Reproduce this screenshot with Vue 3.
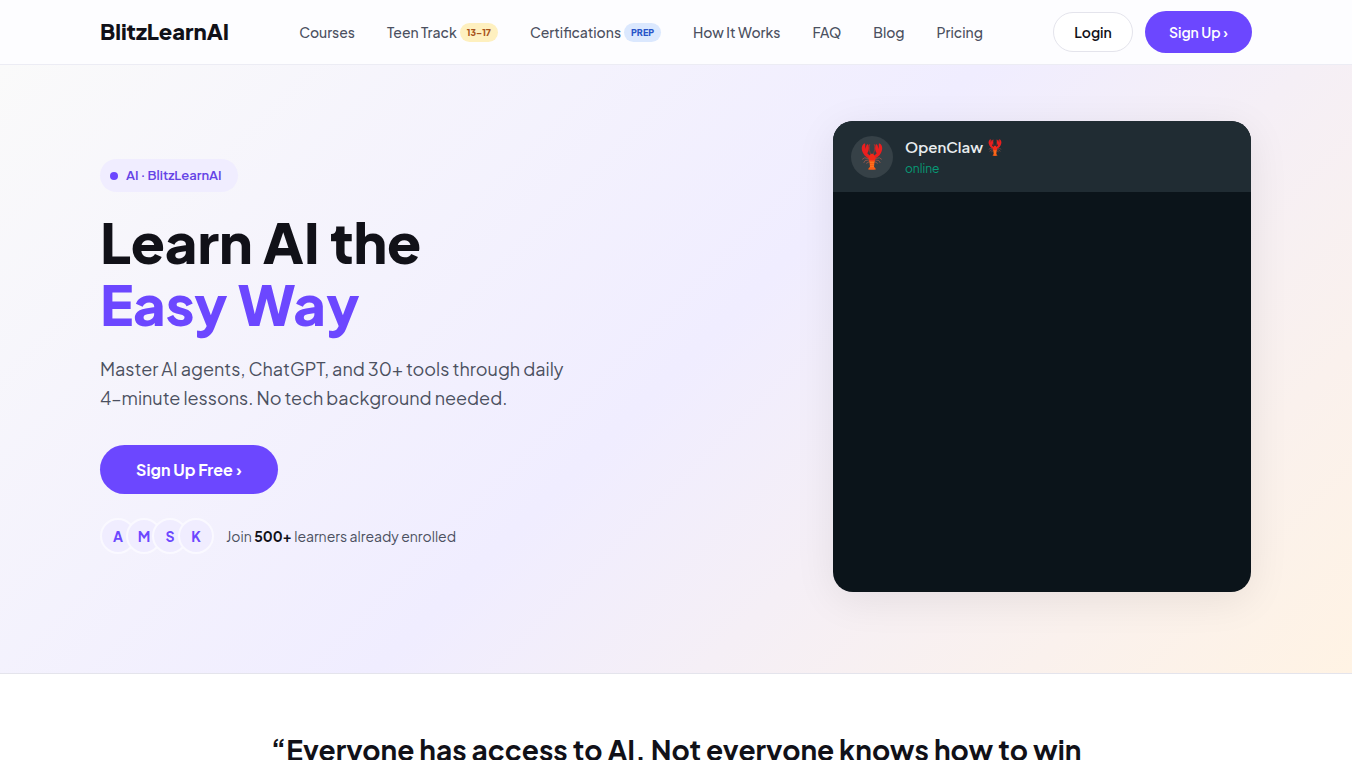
<script setup>
const links = [
  { label: 'Courses' },
  { label: 'Teen Track', tag: '13–17', tone: 'amber' },
  { label: 'Certifications', tag: 'PREP', tone: 'blue' },
  { label: 'How It Works' },
  { label: 'FAQ' },
  { label: 'Blog' },
  { label: 'Pricing' },
]
const learners = ['A', 'M', 'S', 'K']
</script>

<template>
  <div class="page">
    <svg class="defs" width="0" height="0" aria-hidden="true">
      <symbol id="lobster" viewBox="0 0 32 40">
        <g fill="none" stroke-linecap="round">
          <path d="M15 18C12 13 11 7 12.500 2M17 18c3-5 4-11 2.500-16" stroke="#a8362c" stroke-width="1.100" />
          <path d="m12 23-7-1-3 2M20 23l7-1 3 2M12 25l-6 1-2 3M20 25l6 1 2 3M13 27l-5 3M19 27l5 3" stroke="#b8604e" stroke-width="1" />
        </g>
        <path d="M14 24C9 22 5 19 3 15 0 10 0 4 4 1c2-1 2 0 2 2l0 6 2-6c1-2 3-1 3 1 1 5 0 8-2 11l6 6Z" fill="#ea1f1f" />
        <path d="M18 24c5-2 9-5 11-9 3-5 3-11-1-14-2-1-2 0-2 2l0 6-2-6c-1-2-3-1-3 1-1 5 0 8 2 11l-6 6Z" fill="#ea1f1f" />
        <path d="M16 16c-3 0-5 4-5 7 0 4 2 6 5 6s5-2 5-6c0-3-2-7-5-7Z" fill="#f22a18" />
        <path d="M12 26h8l-1 9 3 4c-3 1-9 1-12 0l3-4Z" fill="#fa5c14" />
        <path d="M12.500 29h7M13 32h6M13 35h6" stroke="#ff8126" stroke-width="1" />
      </symbol>
    </svg>

    <header class="topbar">
      <div class="container bar">
        <a class="logo" href="#">BlitzLearnAI</a>
        <nav class="nav" aria-label="Main">
          <a v-for="l in links" :key="l.label" href="#">{{ l.label }}<span v-if="l.tag" class="tag" :class="l.tone">{{ l.tag }}</span></a>
        </nav>
        <div class="actions">
          <a class="btn login" href="#">Login</a>
          <a class="btn signup" href="#">Sign Up ›</a>
        </div>
      </div>
    </header>

    <main>
      <section class="hero">
        <div class="container hero-grid">
          <div class="intro">
            <span class="pill"><i class="dot"></i>AI · BlitzLearnAI</span>
            <h1>Learn AI the<br /><span>Easy Way</span></h1>
            <p class="lead">Master AI agents, ChatGPT, and 30+ tools through daily<br />4–minute lessons. No tech background needed.</p>
            <a class="btn cta" href="#">Sign Up Free ›</a>
            <div class="proof">
              <div class="avatars"><span v-for="n in learners" :key="n">{{ n }}</span></div>
              <p>Join <strong>500+</strong> learners already enrolled</p>
            </div>
          </div>
          <div class="chat">
            <div class="chat-head">
              <div class="chat-avatar"><svg width="22" height="27" aria-hidden="true"><use href="#lobster" /></svg></div>
              <div>
                <div class="chat-name">OpenClaw <svg width="14" height="17" aria-hidden="true"><use href="#lobster" /></svg></div>
                <div class="chat-status">online</div>
              </div>
            </div>
            <div class="chat-body"></div>
          </div>
        </div>
      </section>
      <section class="quote">
        <h2>“Everyone has access to AI. Not everyone knows how to win</h2>
      </section>
    </main>
  </div>
</template>

<style>
body { margin: 0; overflow: hidden; background: #fff; }
</style>

<style scoped>
.page {
  height: 100vh;
  overflow: hidden;
  font-family: "Plus Jakarta Sans", Inter, "Liberation Sans", sans-serif;
  color: #111118;
}
.page * { box-sizing: border-box; }
a { color: inherit; text-decoration: none; }
h1, h2, p { margin: 0; }
.defs { position: absolute; }
.container { max-width: 1200px; margin: 0 auto; padding: 0 24px; }
.topbar { background: #fdfdff; border-bottom: 1px solid #ececf4; }
.bar { height: 64px; display: flex; align-items: center; justify-content: space-between; }
.logo { padding-bottom: 2px; font-size: 22px; font-weight: 800; line-height: 28px; }
.nav { display: flex; align-items: center; gap: 32px; font-size: 14px; font-weight: 500; line-height: 20px; color: #4b5060; white-space: nowrap; }
.nav a { display: flex; align-items: center; gap: 3px; }
.tag { padding: 0 7px; border-radius: 10px; font-size: 9px; font-weight: 800; line-height: 19px; }
.amber { background: #fef0bf; color: #a8541c; }
.blue { background: #dbe8fe; color: #2855c8; }
.actions { display: flex; align-items: center; gap: 12px; }
.btn { display: inline-flex; align-items: center; justify-content: center; border-radius: 100px; white-space: nowrap; }
.login { min-width: 80px; height: 40px; font-size: 14px; font-weight: 600; border: 1px solid #e4e4ec; background: #fff; }
.signup { min-width: 107px; height: 42px; font-size: 14px; font-weight: 600; background: #6c47ff; color: #fff; }
.hero {
  padding: 56px 0 81px;
  border-bottom: 1px solid #e4e4ec;
  background: linear-gradient(135deg, #fafafa 0%, #f0edff 50%, #fff3e4 100%);
}
.hero-grid { display: flex; align-items: center; justify-content: space-between; gap: 48px; }
.pill { display: inline-flex; align-items: center; gap: 8px; height: 33px; padding: 0 16px 0 10px; border-radius: 100px; background: #f0edff; color: #6544e6; font-size: 13px; font-weight: 600; line-height: 17px; }
.dot { width: 8px; height: 8px; border-radius: 50%; background: #6c47ff; }
.intro { display: flex; flex-direction: column; align-items: flex-start; }
h1 { margin-top: 18px; font-size: 56px; font-weight: 800; line-height: 62px; }
h1 span { color: #6c47ff; }
.lead { margin-top: 20px; font-size: 18px; line-height: 29px; color: #4b5060; font-weight: 400; }
.cta { margin-top: 33px; min-width: 178px; height: 49px; background: #6c47ff; color: #fff; font-size: 16px; font-weight: 700; }
.proof { margin-top: 24px; display: flex; align-items: center; gap: 12px; font-size: 14px; color: #4b5060; }
.proof strong { color: #111118; font-weight: 700; }
.avatars { display: flex; }
.avatars span { width: 36px; height: 36px; border: 2px solid #faf9ff; border-radius: 50%; background: #f0edff; color: #6c47ff; font-weight: 700; display: flex; align-items: center; justify-content: center; }
.avatars span + span { margin-left: -10px; }
.chat { flex: 0 1 418px; margin-right: 1px; border-radius: 20px; overflow: hidden; background: #0b141a; box-shadow: 0 8px 40px rgba(17, 17, 24, .08); }
.chat-head { display: flex; align-items: center; gap: 12px; padding: 13px 18px; min-height: 71px; background: #202c33; }
.chat-avatar { width: 42px; height: 42px; border-radius: 50%; background: #364147; display: flex; align-items: center; justify-content: center; }
.chat-name { display: flex; align-items: center; gap: 5px; padding-top: 2px; color: #e9edef; font-size: 15px; font-weight: 600; line-height: 22px; }
.chat-status { color: #079b76; font-size: 12px; line-height: 21px; }
.chat-body { height: 400px; }
.quote { padding: 55px 24px; text-align: center; }
h2 { font-size: 28px; font-weight: 700; line-height: 42px; white-space: nowrap; }
</style>
